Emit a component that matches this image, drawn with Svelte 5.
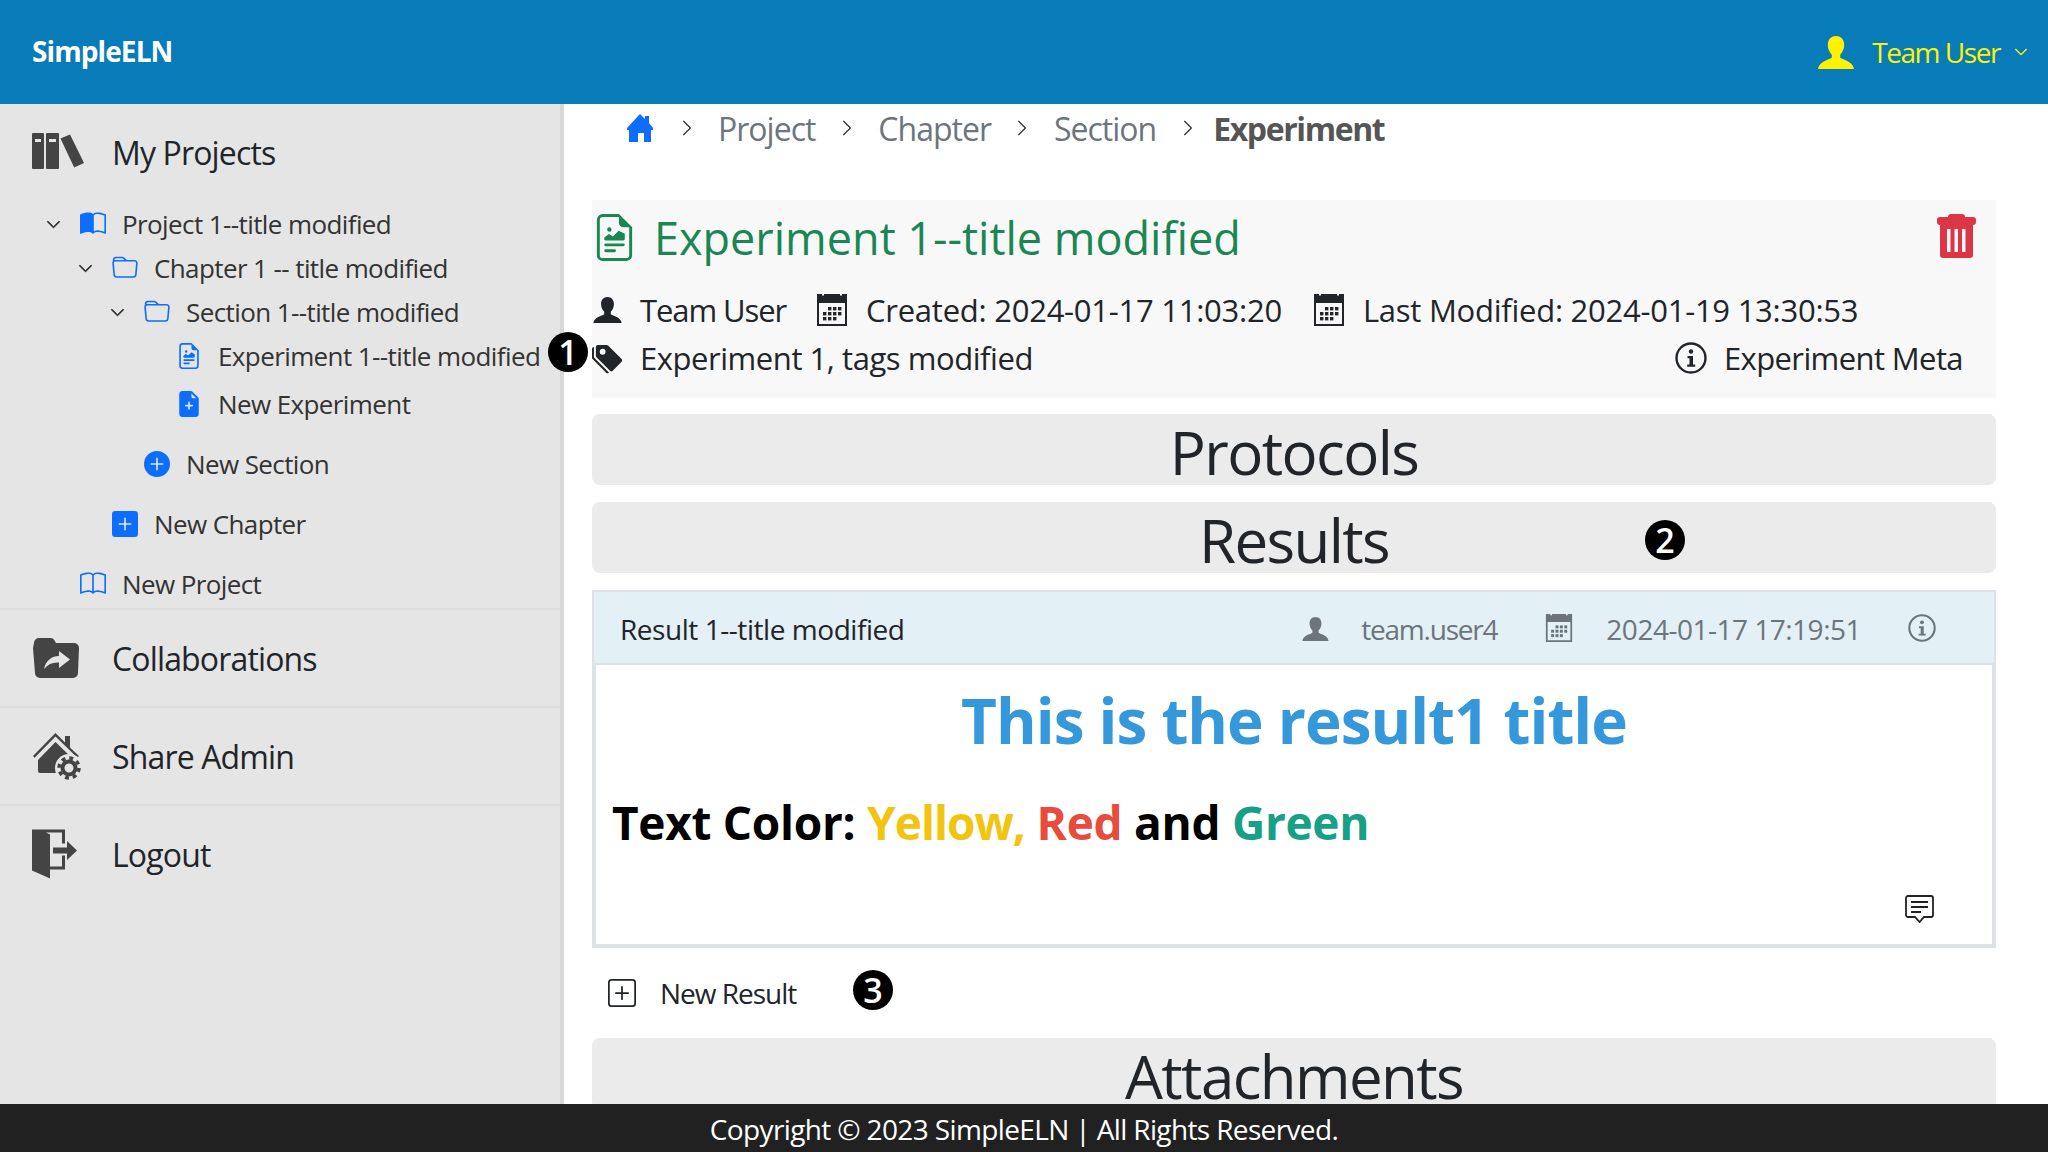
<script>
  const tree = [
    { label: 'Project 1--title modified', depth: 0, icon: 'bookHalf', open: true },
    { label: 'Chapter 1 -- title modified', depth: 1, icon: 'folder', open: true },
    { label: 'Section 1--title modified', depth: 2, icon: 'folder', open: true },
    { label: 'Experiment 1--title modified', depth: 3, icon: 'richtext' },
    { label: 'New Experiment', depth: 3, icon: 'filePlus', gap: 4 },
    { label: 'New Section', depth: 2, icon: 'circlePlus', gap: 16 },
    { label: 'New Chapter', depth: 1, icon: 'squarePlus', gap: 16 },
    { label: 'New Project', depth: 0, icon: 'book', gap: 16 }
  ];

  const crumbs = ['Project', 'Chapter', 'Section'];

  const icons = {
    bookHalf: 'M8.5 2.687c.654-.689 1.782-.886 3.112-.752 1.234.124 2.503.523 3.388.893v9.923c-.918-.35-2.107-.692-3.287-.81-1.094-.111-2.278-.039-3.213.492V2.687zM8 1.783C7.015.936 5.587.81 4.287.94c-1.514.153-3.042.672-3.994 1.105A.5.5 0 0 0 0 2.5v11a.5.5 0 0 0 .707.455c.882-.4 2.303-.881 3.68-1.02 1.409-.142 2.59.087 3.223.877a.5.5 0 0 0 .78 0c.633-.79 1.814-1.019 3.222-.877 1.378.139 2.8.62 3.681 1.02A.5.5 0 0 0 16 13.5v-11a.5.5 0 0 0-.293-.455c-.952-.433-2.48-.952-3.994-1.105C10.413.809 8.985.936 8 1.783z',
    book: 'M1 2.828c.885-.37 2.154-.769 3.388-.893 1.33-.134 2.458.063 3.112.752v9.746c-.935-.53-2.12-.603-3.213-.493-1.18.12-2.37.461-3.287.811V2.828zm7.5-.141c.654-.689 1.782-.886 3.112-.752 1.234.124 2.503.523 3.388.893v9.923c-.918-.35-2.107-.692-3.287-.81-1.094-.111-2.278-.039-3.213.492V2.687zM8 1.783C7.015.936 5.587.81 4.287.94c-1.514.153-3.042.672-3.994 1.105A.5.5 0 0 0 0 2.5v11a.5.5 0 0 0 .707.455c.882-.4 2.303-.881 3.68-1.02 1.409-.142 2.59.087 3.223.877a.5.5 0 0 0 .78 0c.633-.79 1.814-1.019 3.222-.877 1.378.139 2.8.62 3.681 1.02A.5.5 0 0 0 16 13.5v-11a.5.5 0 0 0-.293-.455c-.952-.433-2.48-.952-3.994-1.105C10.413.809 8.985.936 8 1.783z',
    folder: 'M.54 3.87.5 3a2 2 0 0 1 2-2h3.672a2 2 0 0 1 1.414.586l.828.828A2 2 0 0 0 9.828 3h3.982a2 2 0 0 1 1.992 2.181l-.637 7A2 2 0 0 1 13.174 14H2.826a2 2 0 0 1-1.991-1.819l-.637-7a1.99 1.99 0 0 1 .342-1.31zM2.19 4a1 1 0 0 0-.996 1.09l.637 7a1 1 0 0 0 .995.91h10.348a1 1 0 0 0 .995-.91l.637-7A1 1 0 0 0 13.81 4H2.19zm4.69-1.707A1 1 0 0 0 6.172 2H2.5a1 1 0 0 0-1 .981l.006.139C1.72 3.042 1.95 3 2.19 3h5.396l-.707-.707z',
    richtext: 'M14 4.5V14a2 2 0 0 1-2 2H4a2 2 0 0 1-2-2V2a2 2 0 0 1 2-2h5.5L14 4.5zm-3 0A1.5 1.5 0 0 1 9.5 3V1H4a1 1 0 0 0-1 1v12a1 1 0 0 0 1 1h8a1 1 0 0 0 1-1V4.5h-2zM4.5 12.5A.5.5 0 0 1 5 12h3a.5.5 0 0 1 0 1H5a.5.5 0 0 1-.5-.5zm0-2A.5.5 0 0 1 5 10h6a.5.5 0 0 1 0 1H5a.5.5 0 0 1-.5-.5zm1.639-3.708 1.33.886 1.854-1.855a.25.25 0 0 1 .289-.047l1.888.974V8.5a.5.5 0 0 1-.5.5H5a.5.5 0 0 1-.5-.5V8s1.54-1.274 1.639-1.208zM6.25 6a.75.75 0 1 0 0-1.5.75.75 0 0 0 0 1.5z',
    filePlus: 'M9.293 0H4a2 2 0 0 0-2 2v12a2 2 0 0 0 2 2h8a2 2 0 0 0 2-2V4.707A1 1 0 0 0 13.707 4L10 .293A1 1 0 0 0 9.293 0zM9.5 3.5v-2l3 3h-2a1 1 0 0 1-1-1zM8.5 7v1.5H10a.5.5 0 0 1 0 1H8.5V11a.5.5 0 0 1-1 0V9.5H6a.5.5 0 0 1 0-1h1.5V7a.5.5 0 0 1 1 0z',
    circlePlus: 'M16 8A8 8 0 1 1 0 8a8 8 0 0 1 16 0zM8.5 4.5a.5.5 0 0 0-1 0v3h-3a.5.5 0 0 0 0 1h3v3a.5.5 0 0 0 1 0v-3h3a.5.5 0 0 0 0-1h-3v-3z',
    squarePlus: 'M2 0a2 2 0 0 0-2 2v12a2 2 0 0 0 2 2h12a2 2 0 0 0 2-2V2a2 2 0 0 0-2-2H2zm6.5 4.5v3h3a.5.5 0 0 1 0 1h-3v3a.5.5 0 0 1-1 0v-3h-3a.5.5 0 0 1 0-1h3v-3a.5.5 0 0 1 1 0z',
    squareOutline: 'M14 1a1 1 0 0 1 1 1v12a1 1 0 0 1-1 1H2a1 1 0 0 1-1-1V2a1 1 0 0 1 1-1h12zM2 0a2 2 0 0 0-2 2v12a2 2 0 0 0 2 2h12a2 2 0 0 0 2-2V2a2 2 0 0 0-2-2H2zM8 4a.5.5 0 0 1 .5.5v3h3a.5.5 0 0 1 0 1h-3v3a.5.5 0 0 1-1 0v-3h-3a.5.5 0 0 1 0-1h3v-3A.5.5 0 0 1 8 4z',
    chevronDown: 'M1.646 4.646a.5.5 0 0 1 .708 0L8 10.293l5.646-5.647a.5.5 0 0 1 .708.708l-6 6a.5.5 0 0 1-.708 0l-6-6a.5.5 0 0 1 0-.708z',
    chevronRight: 'M4.646 1.646a.5.5 0 0 1 .708 0l6 6a.5.5 0 0 1 0 .708l-6 6a.5.5 0 0 1-.708-.708L10.293 8 4.646 2.354a.5.5 0 0 1 0-.708z',
    tags: 'M2 2a1 1 0 0 1 1-1h4.586a1 1 0 0 1 .707.293l7 7a1 1 0 0 1 0 1.414l-4.586 4.586a1 1 0 0 1-1.414 0l-7-7A1 1 0 0 1 2 6.586V2zm3.5 4a1.5 1.5 0 1 0 0-3 1.5 1.5 0 0 0 0 3zM1.293 7.793A1 1 0 0 1 1 7.086V2a1 1 0 0 0-1 1v4.586a1 1 0 0 0 .293.707l7 7a1 1 0 0 0 1.414 0l.043-.043-7.457-7.457z'
  };
</script>

{#snippet bi(name, cls)}
  <svg class={cls} viewBox="0 0 16 16" fill="currentColor" aria-hidden="true"><path fill-rule="evenodd" d={icons[name]} /></svg>
{/snippet}

{#snippet person(cls)}
  <svg class={cls} viewBox="0 0 36 33" fill="currentColor" aria-hidden="true">
    <path d="M18 0c5.200 0 8.200 3.800 8.200 9 0 4-1.800 7.600-4 9.700v3.100c3 2.200 12.800 3.600 13.800 11.200H0c1-7.600 10.800-9 13.800-11.200v-3.100c-2.200-2.100-4-5.700-4-9.700C9.800 3.800 12.800 0 18 0z" />
  </svg>
{/snippet}

{#snippet calendar(cls)}
  <svg class={cls} viewBox="0 0 30 32" fill="currentColor" aria-hidden="true">
    <path fill-rule="evenodd" d="M0 0h5v1.500h2V0h16v1.500h2V0h5v32H0zm2 9v21h26V9z" />
    {#each [0, 1, 2] as r}
      {#each [0, 1, 2, 3] as c}
        {#if !(r === 0 && c === 0) && !(r === 2 && c === 3)}
          <rect x={6 + c * 5} y={13 + r * 5} width="3.400" height="3.400" />
        {/if}
      {/each}
    {/each}
  </svg>
{/snippet}

{#snippet info(cls)}
  <svg class={cls} viewBox="0 0 32 32" aria-hidden="true">
    <circle cx="16" cy="16" r="14.500" fill="none" stroke="currentColor" stroke-width="2.400" />
    <circle cx="16" cy="9.500" r="2.200" fill="currentColor" />
    <path d="M12.500 14h5.500v8.500h2.200v2.200h-8v-2.200h2.300v-6.300h-2z" fill="currentColor" />
  </svg>
{/snippet}

<div class="page">
  <header class="topbar">
    <span class="brand">SimpleELN</span>
    <div class="user">
      {@render person('user-icon')}
      <span class="user-name">Team User</span>
      {@render bi('chevronDown', 'user-caret')}
    </div>
  </header>

  <div class="body">
    <aside class="sidebar">
      <div class="nav-item first">
        <svg class="nav-icon books" viewBox="0 0 52 36" fill="#444" aria-hidden="true">
          <path fill-rule="evenodd" d="M1 0h10a1 1 0 0 1 1 1v34a1 1 0 0 1-1 1H1a1 1 0 0 1-1-1V1a1 1 0 0 1 1-1zm2 6v3h6V6H3zM15 0h11a1 1 0 0 1 1 1v34a1 1 0 0 1-1 1H15a1 1 0 0 1-1-1V1a1 1 0 0 1 1-1zm2 6v3h7V6h-7z" />
          <path d="M28.500 5.500 38 1.500l14 28.500-9.800 4.500z" />
        </svg>
        <span>My Projects</span>
      </div>

      <ul class="tree">
        {#each tree as row}
          <li class="tree-row" style="padding-left: {80 + row.depth * 32}px; margin-top: {row.gap || 0}px">
            {#if row.open}
              {@render bi('chevronDown', 'tree-caret')}
            {/if}
            {@render bi(row.icon, 'tree-icon')}
            <span>{row.label}</span>
          </li>
        {/each}
      </ul>

      <div class="nav-item">
        <svg class="nav-icon collab" viewBox="0 0 46 40" fill="#444" aria-hidden="true">
          <path fill-rule="evenodd" d="M1 5a5 5 0 0 1 5-5h11c3 0 4 1 6 5h18a5 5 0 0 1 5 5l-1 25a5 5 0 0 1-5 5H7a5 5 0 0 1-5-5L0 10zM26 13v5c-7 0-13 4-15 13 4-5 9-7 15-6.500V30l11-8.500z" />
        </svg>
        <span>Collaborations</span>
      </div>
      <div class="nav-item">
        <svg class="nav-icon house" viewBox="0 0 47 46" fill="#444" aria-hidden="true">
          <path d="M0 23 22.500 0l9.500 9.500V3h5v11.500L46 23l-1.600 1.800L22.500 3.500 1.600 24.800z" />
          <path d="M5 27 22.500 9 38 24v16H7a2 2 0 0 1-2-2z" />
          <circle cx="36" cy="35" r="14" fill="#e5e5e5" />
          <circle cx="36" cy="35" r="10" fill="none" stroke="#444" stroke-width="3.500" stroke-dasharray="3.900 3.950" />
          <circle cx="36" cy="35" r="6.500" fill="none" stroke="#444" stroke-width="4" />
        </svg>
        <span>Share Admin</span>
      </div>
      <div class="nav-item">
        <svg class="nav-icon door" viewBox="0 0 45 49" fill="#444" aria-hidden="true">
          <path d="M0 0h33v14h-3V3H14L18 5v32h12V26h3v14H18v9L0 41z" />
          <path d="M21 18h14v-6.500L45 21 35 30.500V24H21z" />
        </svg>
        <span>Logout</span>
      </div>
    </aside>

    <main class="content">
      <nav class="crumbs">
        <svg class="home" viewBox="0 0 26 28" fill="#0d6efd" aria-hidden="true">
          <path fill-rule="evenodd" d="M13 0l5 5V2h4v7l4 5v2h-2v12h-7v-9H11v9H2V16H0v-2z" />
        </svg>
        {#each crumbs as crumb}
          {@render bi('chevronRight', 'crumb-sep')}
          <span class="crumb">{crumb}</span>
        {/each}
        {@render bi('chevronRight', 'crumb-sep')}
        <strong class="crumb-active">Experiment</strong>
      </nav>

      <section class="panel">
        <div class="title-row">
          <div class="title">
            {@render bi('richtext', 'title-icon')}
            <h1>Experiment 1--title modified</h1>
          </div>
          <svg class="trash" viewBox="0 0 39 44" fill="#dc3545" aria-hidden="true">
            <path fill-rule="evenodd" d="M14 0h11a3 3 0 0 1 3 3h8a3 3 0 0 1 3 3v2a3 3 0 0 1-3 3v30a3 3 0 0 1-3 3H6a3 3 0 0 1-3-3V11a3 3 0 0 1-3-3V6a3 3 0 0 1 3-3h8a3 3 0 0 1 3-3zM10 15v23h3.500V15zm7.500 0v23H21V15zm7.500 0v23h3.500V15z" />
          </svg>
        </div>
        <div class="meta">
          {@render person('meta-person')}
          <span class="meta-user">Team User</span>
          {@render calendar('meta-cal')}
          <span class="meta-created">Created: 2024-01-17 11:03:20</span>
          {@render calendar('meta-cal')}
          <span>Last Modified: 2024-01-19 13:30:53</span>
        </div>
        <div class="meta tags-row">
          {@render bi('tags', 'meta-tags')}
          <span class="tag-list">Experiment 1, tags modified</span>
          <span class="meta-link">
            {@render info('meta-info')}
            <span>Experiment Meta</span>
          </span>
        </div>
      </section>

      <div class="bar">Protocols</div>
      <div class="bar">Results</div>

      <article class="card">
        <div class="card-head">
          <span class="card-title">Result 1--title modified</span>
          <div class="card-meta">
            {@render person('card-person')}
            <span class="card-user">team.user4</span>
            {@render calendar('card-cal')}
            <span class="card-date">2024-01-17 17:19:51</span>
            {@render info('card-info')}
          </div>
        </div>
        <div class="card-body">
          <h2>This is the result1 title</h2>
          <p>Text Color: <span class="yellow">Yellow,</span> <span class="red">Red</span> and <span class="green">Green</span></p>
          <svg class="comment" viewBox="0 0 29 28" fill="none" stroke="#222" stroke-width="1.800" aria-hidden="true">
            <path d="M3 1h23a2 2 0 0 1 2 2v17a2 2 0 0 1-2 2h-7l-4.500 5-4.500-5H3a2 2 0 0 1-2-2V3a2 2 0 0 1 2-2z" />
            <path d="M6 7h17M6 12h17M6 17h10" />
          </svg>
        </div>
      </article>

      <div class="new-result">
        {@render bi('squareOutline', 'new-icon')}
        <span>New Result</span>
      </div>

      <div class="bar">Attachments</div>
    </main>
  </div>

  <footer class="footer">Copyright © 2023 SimpleELN | All Rights Reserved.</footer>

  <span class="badge one">1</span>
  <span class="badge two">2</span>
  <span class="badge three">3</span>
</div>

<style>
  :global(body) {
    margin: 0;
    font-family: "Open Sans", "Noto Sans", sans-serif;
    color: #212529;
  }

  .page {
    position: relative;
    height: 1152px;
    display: flex;
    flex-direction: column;
    overflow: hidden;
  }

  .topbar {
    height: 104px;
    flex-shrink: 0;
    background: #087cb8;
    display: flex;
    align-items: center;
    justify-content: space-between;
    padding: 0 20px 0 32px;
  }

  .brand {
    color: #fff;
    font-size: 28px;
    font-weight: 700;
    letter-spacing: -0.9px;
    margin-top: -2px;
  }

  .user {
    display: flex;
    align-items: center;
    color: #fff200;
    font-size: 28px;
    letter-spacing: -1.450px;
  }

  .user :global(.user-icon) {
    width: 36px;
    height: 33px;
    margin-right: 18px;
  }

  .user :global(.user-caret) {
    width: 14px;
    height: 14px;
    margin-left: 14px;
    stroke: currentColor;
    stroke-width: 0.8;
  }

  .body {
    flex: 1;
    min-height: 0;
    display: flex;
  }

  .sidebar {
    width: 560px;
    flex-shrink: 0;
    background: #e5e5e5;
    border-right: 4px solid #d8d8d8;
  }

  .nav-item {
    height: 96px;
    display: flex;
    align-items: center;
    padding-left: 112px;
    position: relative;
    border-top: 2px solid #dedede;
    font-size: 32px;
    letter-spacing: -0.850px;
  }

  .nav-item.first {
    border-top: 0;
    height: 98px;
    padding-bottom: 2px;
    box-sizing: border-box;
  }

  .nav-icon {
    position: absolute;
    left: 32px;
    top: 50%;
    transform: translateY(-50%);
    overflow: visible;
  }

  .books { width: 52px; height: 36px; margin-top: -2px; }
  .collab { width: 46px; height: 40px; left: 33px; }
  .house { width: 47px; height: 46px; left: 33px; }
  .door { width: 45px; height: 49px; }

  .tree {
    list-style: none;
    margin: 0 0 2px;
    padding: 0;
  }

  .tree-row {
    position: relative;
    height: 44px;
    display: flex;
    align-items: center;
    gap: 16px;
    font-size: 26px;
    letter-spacing: -0.600px;
    color: #333;
  }

  .tree-row :global(.tree-caret) {
    position: absolute;
    width: 15px;
    height: 15px;
    margin-left: -34px;
    color: #212529;
    stroke: currentColor;
    stroke-width: 0.8;
  }

  .tree-row :global(.tree-icon) {
    width: 26px;
    height: 26px;
    color: #0d6efd;
    flex-shrink: 0;
  }

  .content {
    flex: 1;
    min-width: 0;
    padding: 0 52px 0 28px;
    overflow: hidden;
  }

  .crumbs {
    height: 48px;
    margin-bottom: 48px;
    display: flex;
    align-items: center;
    padding-left: 35px;
    font-size: 32px;
    letter-spacing: -1px;
    color: #6c757d;
  }

  .home {
    width: 26px;
    height: 28px;
    margin-right: 2px;
  }

  .crumbs :global(.crumb-sep) {
    width: 18px;
    height: 18px;
    color: #212529;
    margin: 0 22.500px;
  }

  .crumb-active {
    color: #555;
    letter-spacing: -1.400px;
    margin-left: -6px;
  }

  .panel {
    height: 198px;
    box-sizing: border-box;
    background: #f8f8f8;
    margin-bottom: 16px;
    padding-right: 20px;
  }

  .title-row {
    height: 74px;
    margin-bottom: 12px;
    display: flex;
    align-items: center;
    justify-content: space-between;
  }

  .title {
    display: flex;
    align-items: center;
    color: #198754;
  }

  .title :global(.title-icon) {
    width: 47px;
    height: 47px;
    margin-left: -1px;
    margin-right: 16px;
  }

  h1 {
    margin: 0;
    font-size: 45px;
    font-weight: 400;
    letter-spacing: 0;
  }

  .trash {
    width: 39px;
    height: 44px;
    margin-top: -3px;
  }

  .meta {
    height: 48px;
    display: flex;
    align-items: center;
    font-size: 31px;
    letter-spacing: -0.250px;
    color: #212529;
  }

  .meta :global(.meta-person) {
    width: 29px;
    height: 26px;
    margin-left: 1px;
    margin-right: 18px;
  }

  .meta-user {
    margin-right: 31px;
    letter-spacing: -1.100px;
  }

  .meta :global(.meta-cal) {
    width: 30px;
    height: 32px;
    margin-right: 19px;
  }

  .meta-created {
    margin-right: 32px;
  }

  .tags-row :global(.meta-tags) {
    width: 31px;
    height: 31px;
    margin-right: 17px;
  }

  .tag-list {
    letter-spacing: -0.450px;
  }

  .meta-link {
    display: flex;
    align-items: center;
    margin-left: auto;
    margin-right: 13px;
    letter-spacing: -0.600px;
  }

  .meta-link :global(.meta-info) {
    width: 32px;
    height: 32px;
    margin-right: 17px;
  }

  .bar {
    height: 71px;
    box-sizing: border-box;
    background: #ebebeb;
    border-radius: 8px;
    margin-bottom: 17px;
    padding-top: 5px;
    text-align: center;
    font-size: 60px;
    line-height: 66px;
    letter-spacing: -1.600px;
  }

  .card {
    height: 358px;
    display: flex;
    flex-direction: column;
    box-sizing: border-box;
    border: 2px solid #dee2e6;
    border-bottom: 4px solid #dee2e6;
  }

  .card-head {
    height: 73px;
    flex-shrink: 0;
    box-sizing: border-box;
    display: flex;
    align-items: center;
    justify-content: space-between;
    background: #e3f0f5;
    border-bottom: 2px solid #dee2e6;
    padding: 2px 58px 0 26px;
    font-size: 28px;
    letter-spacing: -0.450px;
  }

  .card-meta {
    display: flex;
    align-items: center;
    color: #6c757d;
  }

  .card-meta :global(.card-person) {
    width: 27px;
    height: 24px;
    margin-right: 32px;
  }

  .card-user {
    margin-right: 48px;
    letter-spacing: -1.200px;
  }

  .card-meta :global(.card-cal) {
    width: 28px;
    height: 28px;
    margin-right: 33px;
    margin-top: -2px;
  }

  .card-date {
    margin-right: 47px;
    letter-spacing: -0.500px;
  }

  .card-meta :global(.card-info) {
    width: 28px;
    height: 28px;
    margin-top: -2px;
  }

  .card-body {
    flex: 1;
    min-height: 0;
    display: flex;
    flex-direction: column;
    border: solid #dee2e6;
    border-width: 0 2px;
    padding: 14px 58px 0 16px;
  }

  h2 {
    margin: 0 -42px 0 0;
    height: 82px;
    line-height: 82px;
    text-align: center;
    color: #3498db;
    font-size: 62px;
    font-weight: 700;
    letter-spacing: -1px;
  }

  p {
    margin: 29px 0 0;
    font-size: 46px;
    line-height: 64px;
    font-weight: 700;
    color: #000;
    letter-spacing: -0.300px;
  }

  .yellow { color: #f1c40f; letter-spacing: -1px; }
  .red { color: #e74c3c; }
  .green { color: #16a085; }

  .comment {
    align-self: flex-end;
    width: 29px;
    height: 28px;
    margin-top: 41px;
  }

  .new-result {
    height: 90px;
    display: flex;
    align-items: center;
    padding-left: 16px;
    font-size: 28px;
    letter-spacing: -1px;
  }

  .new-result :global(.new-icon) {
    width: 28px;
    height: 28px;
    margin-right: 24px;
  }

  .footer {
    height: 48px;
    flex-shrink: 0;
    background: #212121;
    color: #fff;
    text-align: center;
    font-size: 28px;
    line-height: 50px;
    letter-spacing: -0.630px;
  }

  .badge {
    position: absolute;
    width: 40px;
    height: 40px;
    border-radius: 50%;
    background: #000;
    color: #fff;
    font-size: 34px;
    font-weight: 600;
    line-height: 40px;
    text-align: center;
  }

  .one { left: 548px; top: 332px; }
  .two { left: 1645px; top: 520px; }
  .three { left: 853px; top: 970px; }
</style>
